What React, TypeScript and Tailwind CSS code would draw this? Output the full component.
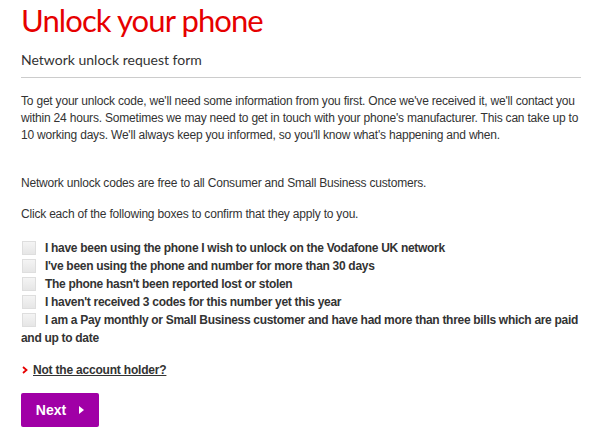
const items = [
  "I have been using the phone I wish to unlock on the Vodafone UK network",
  "I've been using the phone and number for more than 30 days",
  "The phone hasn't been reported lost or stolen",
  "I haven't received 3 codes for this number yet this year",
  "I am a Pay monthly or Small Business customer and have had more than three bills which are paid and up to date",
];

export default function App() {
  return (
    <div className="w-[600px] h-[434px] bg-white overflow-hidden pl-[21px] pr-[19px] pt-[2px] text-[#333] font-['Liberation_Sans',Arial,sans-serif] tracking-[-0.2px]">
      <h1 className="font-['Lato',sans-serif] text-[31px] leading-[36px] text-[#e60000] tracking-[-0.9px]">Unlock your phone</h1>
      <h2 className="font-['Lato',sans-serif] text-[14px] leading-[20px] text-[#333] tracking-[0px] mt-[12px] pb-[7px] border-b border-[#ccc]">Network unlock request form</h2>
      <p className="text-[12px] leading-[17px] mt-[15px]">
        To get your unlock code, we'll need some information from you first. Once we've received it, we'll contact you within 24 hours. Sometimes we may need to get in touch with your phone's manufacturer. This can take up to 10 working days. We'll always keep you informed, so you'll know what's happening and when.
      </p>
      <p className="text-[12px] leading-[17px] mt-[31px]">Network unlock codes are free to all Consumer and Small Business customers.</p>
      <p className="text-[12px] leading-[17px] mt-[14px]">Click each of the following boxes to confirm that they apply to you.</p>
      <ul className="mt-[16px] tracking-[-0.3px]">
        {items.map((t) => (
          <li key={t} className="text-[12px] leading-[18px] font-bold">
            <span className="inline-block w-[14px] h-[14px] bg-gradient-to-b from-[#f4f4f4] to-[#e6e6e6] border border-[#dedede] align-[-3px] ml-[1px] mr-[9px]" />
            {t}
          </li>
        ))}
      </ul>
      <div className="flex items-center mt-[14px] text-[12px] font-bold">
        <svg width="6" height="8" viewBox="0 0 6 8" className="ml-[1px]">
          <path d="M1 1 L4.5 4 L1 7" stroke="#e60000" strokeWidth="1.8" fill="none" />
        </svg>
        <a className="underline ml-[5px]">Not the account holder?</a>
      </div>
      <button className="mt-[14px] w-[78px] h-[34px] bg-[#a000a6] rounded-[2px] text-white text-[14px] font-bold tracking-[0px] flex items-center justify-center gap-[13px]">
        <span>Next</span>
        <svg width="5" height="8" viewBox="0 0 5 8">
          <path d="M0 0 L5 4 L0 8 Z" fill="#fff" />
        </svg>
      </button>
    </div>
  );
}
